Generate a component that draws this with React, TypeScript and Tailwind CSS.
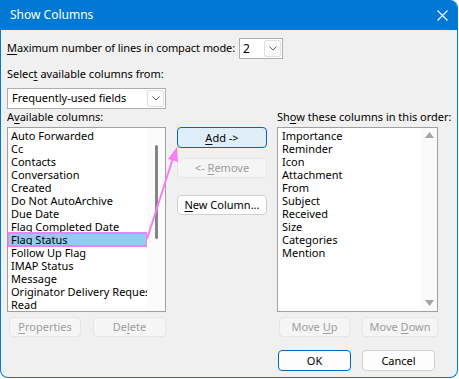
import type { ReactNode } from 'react'

const available = [
  'Auto Forwarded',
  'Cc',
  'Contacts',
  'Conversation',
  'Created',
  'Do Not AutoArchive',
  'Due Date',
  'Flag Completed Date',
  'Flag Status',
  'Follow Up Flag',
  'IMAP Status',
  'Message',
  'Originator Delivery Requested',
  'Read',
]

const shown = [
  'Importance',
  'Reminder',
  'Icon',
  'Attachment',
  'From',
  'Subject',
  'Received',
  'Size',
  'Categories',
  'Mention',
]

type Variant = 'normal' | 'disabled' | 'focused' | 'default'

const variants: Record<Variant, string> = {
  normal: 'bg-[#fdfdfd] border-[#d0d0d0] text-black',
  disabled: 'bg-[#f5f5f5] border-[#e6e6e6] text-[#9d9d9d]',
  focused: 'bg-[#e0eef9] border-[#0067c0] text-black',
  default: 'bg-[#fdfdfd] border-[#0067c0] text-black',
}

const Button = ({ children, variant = 'normal', className = '' }: { children: ReactNode; variant?: Variant; className?: string }) => (
  <div className={`flex items-center justify-center rounded-[4px] border text-[11px] ${variants[variant]} ${className}`}>
    <span className="whitespace-pre leading-[14px]">{children}</span>
  </div>
)

const U = ({ children }: { children: ReactNode }) => <span className="underline underline-offset-2">{children}</span>

const Chevron = () => (
  <div className="flex h-[17px] w-[17px] items-center justify-center rounded-[2px] border border-[#e0e0e0] bg-[#fbfbfb]">
    <svg width="8" height="5" viewBox="0 0 8 5" fill="none">
      <path d="M0.5 0.5 L4 4 L7.5 0.5" stroke="#5f5f5f" strokeWidth="1" />
    </svg>
  </div>
)

const App = () => (
  <div className="relative h-[379px] w-[459px] bg-white font-['Noto_Sans',sans-serif] text-[11px] text-black">
    <div className="flex h-[378px] w-[458px] flex-col overflow-hidden rounded-tr-[8px] rounded-b-[8px] border-x border-b border-[#0078d4] bg-[#f0f0f0]">
      {/* title bar */}
      <div className="flex h-[30px] shrink-0 items-center justify-between bg-[#0078d4] pl-[9px] pr-[9px] text-white">
        <span className="text-[12px]">Show Columns</span>
        <svg width="11" height="11" viewBox="0 0 11 11">
          <path d="M0.5 0.5 L10.5 10.5 M10.5 0.5 L0.5 10.5" stroke="white" strokeWidth="1.1" />
        </svg>
      </div>

      <div className="flex flex-col pl-[6px] pt-[8px]">
        <div className="flex h-[21px] items-center">
          <span className="whitespace-nowrap tracking-[-0.1px]">
            <U>M</U>aximum number of lines in compact mode:
          </span>
          <div className="ml-[4px] flex h-[21px] w-[44px] items-center justify-between border border-[#adadad] bg-white pl-[3px] pr-[1px]">
            <span className="text-[12px]">2</span>
            <Chevron />
          </div>
        </div>

        <div className="mt-[7px] h-[16px] leading-[16px]">
          Selec<U>t</U> available columns from:
        </div>

        <div className="mt-[6px] flex h-[21px] w-[159px] items-center justify-between border border-[#adadad] bg-white pl-[4px] pr-[1px]">
          <span>Frequently-used fields</span>
          <Chevron />
        </div>

        <div className="flex">
          {/* left column */}
          <div className="flex w-[159px] flex-col">
            <div className="h-[16px] leading-[16px]">
              A<U>v</U>ailable columns:
            </div>
            <div className="mt-[2px] flex h-[185px] border border-[#a0a0a0] bg-white">
              <div className="flex w-[139px] flex-col overflow-hidden pt-[1px]">
                {available.map((item) =>
                  item === 'Flag Status' ? (
                    <div
                      key={item}
                      className="h-[13px] whitespace-nowrap bg-[#99c9ef] pl-[3px] leading-[13px] outline-2 outline-[#f77ef7] -outline-offset-1"
                    >
                      {item}
                    </div>
                  ) : (
                    <div key={item} className="h-[13px] whitespace-nowrap pl-[3px] leading-[13px]">
                      {item}
                    </div>
                  )
                )}
              </div>
              <div className="flex flex-1 justify-center bg-[#fbfbfb] pt-[17px]">
                <div className="h-[94px] w-[3px] rounded-full bg-[#858585]" />
              </div>
            </div>
            <div className="mt-[5px] flex gap-[12px] pl-[2px]">
              <Button variant="disabled" className="h-[20px] w-[72px]">
                <U>P</U>roperties
              </Button>
              <Button variant="disabled" className="h-[20px] w-[73px]">
                De<U>l</U>ete
              </Button>
            </div>
          </div>

          {/* middle buttons */}
          <div className="ml-[11px] flex w-[90px] flex-col pt-[18px]">
            <Button variant="focused" className="h-[21px]">
              <U>A</U>dd -&gt;
            </Button>
            <Button variant="disabled" className="mt-[10px] h-[20px]">
              &lt;- <U>R</U>emove
            </Button>
            <Button className="mt-[17px] h-[20px]">
              <U>N</U>ew Column...
            </Button>
          </div>

          {/* right column */}
          <div className="ml-[10px] flex w-[161px] flex-col">
            <div className="h-[16px] whitespace-nowrap leading-[16px]">
              Sh<U>o</U>w these columns in this order:
            </div>
            <div className="mt-[2px] flex h-[185px] border border-[#a0a0a0] bg-white">
              <div className="flex flex-1 flex-col pt-[1px]">
                {shown.map((item) => (
                  <div key={item} className="h-[13px] whitespace-nowrap pl-[4px] leading-[13px]">
                    {item}
                  </div>
                ))}
              </div>
              <div className="flex w-[16px] flex-col items-center justify-between bg-[#fafafa] pb-[5px] pt-[4px]">
                <svg width="9" height="6" viewBox="0 0 9 6">
                  <path d="M0 6 L4.5 0 L9 6 Z" fill="#a3a3a3" />
                </svg>
                <svg width="9" height="6" viewBox="0 0 9 6">
                  <path d="M0 0 L4.5 6 L9 0 Z" fill="#a3a3a3" />
                </svg>
              </div>
            </div>
            <div className="mt-[5px] flex gap-[12px] pl-[2px]">
              <Button variant="disabled" className="h-[20px] w-[72px]">
                Move <U>U</U>p
              </Button>
              <Button variant="disabled" className="h-[20px] w-[77px]">
                Move <U>D</U>own
              </Button>
            </div>
            <div className="mt-[13px] flex gap-[11px] pl-[1px]">
              <Button variant="default" className="h-[21px] w-[73px]">
                OK
              </Button>
              <Button className="h-[21px] w-[73px]">Cancel</Button>
            </div>
          </div>
        </div>
      </div>
    </div>

    {/* pink annotation arrow */}
    <svg className="pointer-events-none absolute left-0 top-0" width="459" height="379">
      <line x1="147" y1="239" x2="173" y2="158" stroke="#f77ef7" strokeWidth="2" />
      <path d="M177 147 L178 162 L168 159 Z" fill="#f77ef7" />
    </svg>
  </div>
)

export default App
